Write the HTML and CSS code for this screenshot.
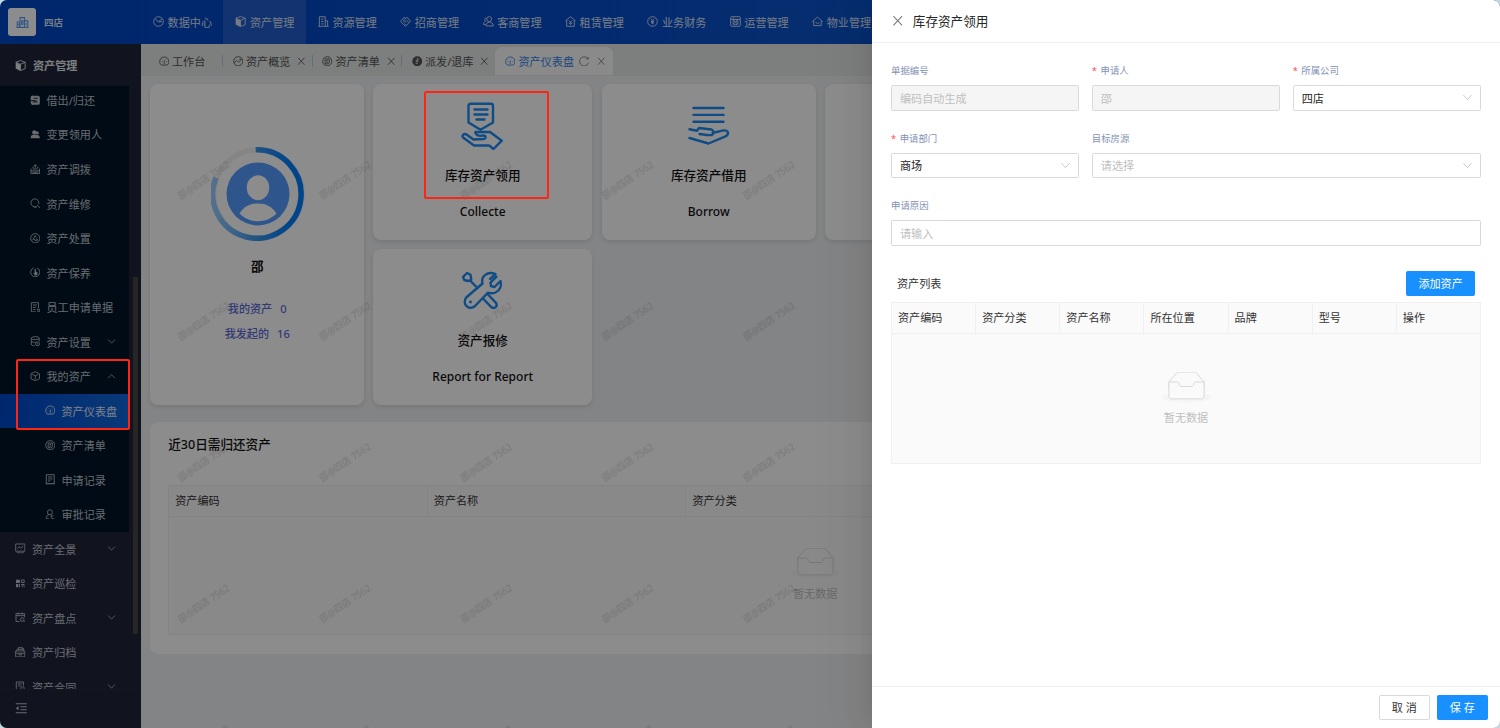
FILE: index.html
```html
<!DOCTYPE html>
<html lang="zh-CN">
<head>
    <meta charset="UTF-8">
    <meta name="viewport" content="width=device-width, initial-scale=1.0">
    <title>资产仪表盘</title>
    <link rel="stylesheet" href="styles.css">
</head>
<body>
    <!-- Icon sprite -->
    <svg class="sprite" xmlns="http://www.w3.org/2000/svg">
        <symbol id="i-city" viewBox="0 0 16 16"><path d="M1.5 14V7.5h3V14M5 14V2h5.500v12M10.500 14V6h4v8M.5 14h15M7 5v6M8.700 5v6M12.500 8.500v3M3 9.500v2"/></symbol>
        <symbol id="i-pie" viewBox="0 0 16 16"><circle cx="8" cy="8" r="7"/><path d="M3 4l5 4.500L13 4M8 8.500l5-.5"/></symbol>
        <symbol id="i-cube-solid" viewBox="0 0 16 16"><path class="fill" d="M1 3.500l6.700 3V16L1 12.500z"/><path d="M1.200 3.300L8 .8l6.800 2.500L8 6.200zM14.800 3.300v9.200L8 15.400V6.200"/></symbol>
        <symbol id="i-building" viewBox="0 0 16 16"><path d="M2 15V1h8.500v14M10.500 7H14v8M.5 15h15M4.500 4.500H8M4.500 8H8M4.500 11.500H8"/></symbol>
        <symbol id="i-shake" viewBox="0 0 16 16"><path d="M8 15L.8 8l5-6L8 3.500 10.500 2l4.700 5.500zM8 3.500L5 7.500l2.500 1.500L10 6.500l3 3M7 11l2 2"/></symbol>
        <symbol id="i-users" viewBox="0 0 16 16"><circle cx="9" cy="4.500" r="3.500"/><path d="M4.500 14.500c0-4 2-5.500 4.500-5.500s6 1 6 5.500zM4.500 2.500C2 3 2 6.500 4 7.500 2 8.500.8 10 .8 12.500H4"/></symbol>
        <symbol id="i-house" viewBox="0 0 16 16"><path d="M.8 7L8 1l7.200 6M2.500 6v9h11V6M5.500 6.500L8 9l2.500-2.500M8 9v4M5.500 10.500h5"/></symbol>
        <symbol id="i-yen" viewBox="0 0 16 16"><circle cx="8" cy="8" r="7"/><path d="M5.500 4L8 7.300 10.500 4M8 7.300V12M5.800 8h4.400M5.800 10h4.400"/></symbol>
        <symbol id="i-oper" viewBox="0 0 16 16"><rect x="1" y="1" width="14" height="14" rx="1.500"/><path d="M1 5h14M4 5.500l8 7M12 5.500l-8 7M4 3h2"/><circle cx="8" cy="9" r="3.800"/></symbol>
        <symbol id="i-home" viewBox="0 0 16 16"><path d="M.8 8L8 1.500 15.200 8H13.500v6h-11V8zM5.500 9c.8 2.500 4.200 2.500 5 0"/></symbol>
        <symbol id="i-gauge" viewBox="0 0 16 16"><path d="M3.500 13.800a7 7 0 1 1 9 0zM8 12V7M4 8.500h1M11 8.500h1M5.500 5l.6.600M10.500 5l-.6.600"/></symbol>
        <symbol id="i-trend" viewBox="0 0 16 16"><circle cx="8" cy="8" r="7"/><path d="M2 10l4-3 2.500 2.500L13 5M9.500 5H13"/></symbol>
        <symbol id="i-list" viewBox="0 0 16 16"><circle cx="8" cy="8" r="7"/><path d="M4.800 4.500h6.400v5.500L9.500 12H4.800zM6.500 7h3M6.500 9.500h3"/></symbol>
        <symbol id="i-send" viewBox="0 0 16 16"><circle class="fill" cx="8" cy="8" r="7.500"/><path class="cut" d="M9 3.500v5.500H6zM5.500 11.500h3"/></symbol>
        <symbol id="i-reload" viewBox="0 0 16 16"><path d="M14.500 10.500A7 7 0 1 1 13.500 4M14 1.500V4.500H11"/></symbol>
        <symbol id="i-close" viewBox="0 0 16 16"><path d="M2 1.500l12 13M14 1.500l-12 13"/></symbol>
        <symbol id="i-lend" viewBox="0 0 16 16"><path class="fill" d="M5 1h7a3 3 0 0 1 3 3v8a3 3 0 0 1-3 3H5a3 3 0 0 1-3.500-3H1V4.500A3.500 3.500 0 0 1 5 1z"/><path class="cut" d="M5.500 5H12M0 8.500h8.500l2.500 2H4"/></symbol>
        <symbol id="i-people" viewBox="0 0 16 16"><circle class="fill" cx="6.500" cy="5" r="3.200"/><circle class="fill" cx="11" cy="6" r="2.500"/><path class="fill" d="M1 14c0-4 2-5.500 5.500-5.500 1.500 0 2 .5 4 .5 3 0 4.500 1.500 4.500 5z"/></symbol>
        <symbol id="i-transfer" viewBox="0 0 16 16"><path d="M1.500 7v7.500h13V7M1 10.500h14M4 7.500h8M8 6V1M5.500 3.500L8 1l2.500 2.500M3.500 5h2M11 5h2M4 12.600h8"/></symbol>
        <symbol id="i-search" viewBox="0 0 16 16"><path d="M9.500 13A6 6 0 1 1 13.200 9M10.500 10.500l4.500 4.500M6 14h4"/></symbol>
        <symbol id="i-dispose" viewBox="0 0 16 16"><circle cx="8" cy="8" r="7"/><path d="M4 11l4-7 1.500 2.500M5.500 8.500L9 12M7 11h4.500L10 8"/></symbol>
        <symbol id="i-care" viewBox="0 0 16 16"><path d="M5.500 1.500a7 7 0 1 0 5 0"/><path class="fill" d="M7 3h2v4l2.500 1.500c.5 2-.5 4-1.500 4.500H7.500L5 9l2 .5z"/></symbol>
        <symbol id="i-doc" viewBox="0 0 16 16"><path d="M9 15H2V1h11v8M4.500 4.500h6M4.500 8h5M4.500 11.500H8M11 11h4v4h-2.500z"/></symbol>
        <symbol id="i-db" viewBox="0 0 16 16"><ellipse cx="8" cy="3.300" rx="6" ry="2.300"/><path d="M2 3.300V13c0 1 2 2 5 2M14 3.300V8M2 8c1 1.500 5 2 7 1.500"/><circle cx="11.500" cy="12" r="3"/><path d="M11.500 11v2"/></symbol>
        <symbol id="i-cube" viewBox="0 0 16 16"><path d="M8 1l6.500 3.200v7.600L8 15l-6.500-3.200V4.200zM3.500 5.200L8 7.500l4.500-2.300M8 7.500V13"/></symbol>
        <symbol id="i-record" viewBox="0 0 16 16"><path d="M2 1h12v14H2zM4.500 4.500h7M4.500 7.500h7M4.500 10.500h4M1 15h14"/></symbol>
        <symbol id="i-stamp" viewBox="0 0 16 16"><circle cx="7.500" cy="5" r="3.800"/><path d="M6 8.500c-3 1-4 3-4 6.500h4M9 9c1 .5 1 2 0 3l2 3h3.500M10 11l3-1"/></symbol>
        <symbol id="i-chart" viewBox="0 0 16 16"><path d="M1 1.500h14v11H1zM3.500 8.500l3-3L9 8l3.500-3.500M2.500 15h11"/></symbol>
        <symbol id="i-qr" viewBox="0 0 16 16"><path class="fill" d="M1.500 2.500h6v5h-6zM1.500 9h3v5h-3zM9.500 9h5v2h-5zM5.500 9h2v5h-2z"/><path d="M10 3h4v4h-4zM10 12.500h1.500v1.500M14 12v2"/></symbol>
        <symbol id="i-check" viewBox="0 0 16 16"><path d="M7 14.500H1.500v-12h13V8M1.500 5.500h13M5 .8v3M11 .8v3"/><circle cx="11" cy="11.500" r="2.800"/><path d="M13 13.500l2 1.500"/></symbol>
        <symbol id="i-archive" viewBox="0 0 16 16"><path d="M1 6h14v9H1zM3 6V3.500h10V6M5 3.500V1h6v2.500M1 9.500h14M6 9.500V12h4V9.500M11 1l3 2.500"/></symbol>
        <symbol id="i-contract" viewBox="0 0 16 16"><path d="M8 14.500H2v-13h11V7M4.500 4.500h6M4.500 7.500h4"/><circle cx="11.500" cy="11" r="2.500"/><path d="M10 15l1.500-1.500L13 15"/></symbol>
        <symbol id="i-down" viewBox="0 0 16 16"><path d="M2 4.500l6 6.500 6-6.500"/></symbol>
        <symbol id="i-up" viewBox="0 0 16 16"><path d="M2 11l6-6.500L14 11"/></symbol>
        <symbol id="i-fold" viewBox="0 0 16 16"><path d="M1 2.200h14M7 6.100h8M7 9.900h8M1 13.800h14"/><path class="fill" d="M4.500 5v6L1 8z"/></symbol>
        <symbol id="i-empty" viewBox="0 0 64 41">
            <ellipse class="empty-shadow" cx="32" cy="33" rx="32" ry="7"/>
            <path class="empty-line" d="M55 12.760L44.854 1.258C44.367.474 43.656 0 42.907 0H21.093c-.749 0-1.460.474-1.947 1.257L9 12.761V22h46v-9.240z"/>
            <path class="empty-line empty-box" d="M41.613 15.931c0-1.605.994-2.930 2.227-2.931H55v18.137C55 33.260 53.680 35 52.050 35h-40.100C10.320 35 9 33.259 9 31.137V13h11.160c1.233 0 2.227 1.323 2.227 2.928v.022c0 1.605 1.005 2.901 2.237 2.901h14.752c1.232 0 2.237-1.308 2.237-2.913v-.007z"/>
        </symbol>
    </svg>

    <div class="app">
        <header class="topbar">
            <div class="brand">
                <span class="logo"><svg class="icon"><use href="#i-city"/></svg></span>
                <span class="brand-name">四店</span>
            </div>
            <nav class="nav">
                <a class="nav-item"><svg class="icon"><use href="#i-pie"/></svg>数据中心</a>
                <a class="nav-item active"><svg class="icon"><use href="#i-cube-solid"/></svg>资产管理</a>
                <a class="nav-item"><svg class="icon"><use href="#i-building"/></svg>资源管理</a>
                <a class="nav-item"><svg class="icon"><use href="#i-shake"/></svg>招商管理</a>
                <a class="nav-item"><svg class="icon"><use href="#i-users"/></svg>客商管理</a>
                <a class="nav-item"><svg class="icon"><use href="#i-house"/></svg>租赁管理</a>
                <a class="nav-item"><svg class="icon"><use href="#i-yen"/></svg>业务财务</a>
                <a class="nav-item"><svg class="icon"><use href="#i-oper"/></svg>运营管理</a>
                <a class="nav-item"><svg class="icon"><use href="#i-home"/></svg>物业管理</a>
            </nav>
        </header>

        <div class="main">
            <aside class="sidebar">
                <div class="side-title"><svg class="icon"><use href="#i-cube-solid"/></svg>资产管理</div>
                <div class="side-scroll">
                    <div class="menu">
                        <div class="submenu">
                            <div class="item lv2"><svg class="icon"><use href="#i-lend"/></svg>借出/归还</div>
                            <div class="item lv2"><svg class="icon"><use href="#i-people"/></svg>变更领用人</div>
                            <div class="item lv2"><svg class="icon"><use href="#i-transfer"/></svg>资产调拨</div>
                            <div class="item lv2"><svg class="icon"><use href="#i-search"/></svg>资产维修</div>
                            <div class="item lv2"><svg class="icon"><use href="#i-dispose"/></svg>资产处置</div>
                            <div class="item lv2"><svg class="icon"><use href="#i-care"/></svg>资产保养</div>
                            <div class="item lv2"><svg class="icon"><use href="#i-doc"/></svg>员工申请单据</div>
                            <div class="item lv2"><svg class="icon"><use href="#i-db"/></svg>资产设置<svg class="icon arrow"><use href="#i-down"/></svg></div>
                            <div class="item lv2"><svg class="icon"><use href="#i-cube"/></svg>我的资产<svg class="icon arrow"><use href="#i-up"/></svg></div>
                            <div class="item lv3 selected"><svg class="icon"><use href="#i-gauge"/></svg>资产仪表盘</div>
                            <div class="item lv3"><svg class="icon"><use href="#i-list"/></svg>资产清单</div>
                            <div class="item lv3"><svg class="icon"><use href="#i-record"/></svg>申请记录</div>
                            <div class="item lv3"><svg class="icon"><use href="#i-stamp"/></svg>审批记录</div>
                        </div>
                        <div class="item"><svg class="icon"><use href="#i-chart"/></svg>资产全景<svg class="icon arrow"><use href="#i-down"/></svg></div>
                        <div class="item"><svg class="icon"><use href="#i-qr"/></svg>资产巡检</div>
                        <div class="item"><svg class="icon"><use href="#i-check"/></svg>资产盘点<svg class="icon arrow"><use href="#i-down"/></svg></div>
                        <div class="item"><svg class="icon"><use href="#i-archive"/></svg>资产归档</div>
                        <div class="item"><svg class="icon"><use href="#i-contract"/></svg>资产合同<svg class="icon arrow"><use href="#i-down"/></svg></div>
                    </div>
                    <div class="scrollbar"></div>
                </div>
                <div class="side-foot"><svg class="icon"><use href="#i-fold"/></svg></div>
            </aside>

            <main class="page">
                <div class="tabs">
                    <div class="tab first"><svg class="icon"><use href="#i-gauge"/></svg>工作台</div>
                    <div class="tab"><svg class="icon"><use href="#i-trend"/></svg>资产概览<svg class="icon x"><use href="#i-close"/></svg></div>
                    <div class="tab"><svg class="icon"><use href="#i-list"/></svg>资产清单<svg class="icon x"><use href="#i-close"/></svg></div>
                    <div class="tab last"><svg class="icon"><use href="#i-send"/></svg>派发/退库<svg class="icon x"><use href="#i-close"/></svg></div>
                    <div class="tab active"><svg class="icon"><use href="#i-gauge"/></svg>资产仪表盘<svg class="icon reload"><use href="#i-reload"/></svg><svg class="icon x"><use href="#i-close"/></svg></div>
                </div>

                <div class="content">
                    <div class="cards">
                        <section class="card profile">
                            <svg class="avatar" viewBox="0 0 94 94">
                                <defs>
                                    <linearGradient id="ring" x1="0" y1="0" x2="1" y2="0">
                                        <stop offset="0" stop-color="#98cdff"/>
                                        <stop offset=".5" stop-color="#3898ee"/>
                                        <stop offset=".85" stop-color="#007ffb"/>
                                    </linearGradient>
                                </defs>
                                <circle class="ring-bg" cx="47" cy="47" r="44.200"/>
                                <path class="ring" d="M44.700 2.860A44.200 44.200 0 1 1 4.800 30.800"/>
                                <circle class="face-bg" cx="47" cy="47" r="31.500"/>
                                <ellipse class="face" cx="47" cy="40.700" rx="11.200" ry="12.500"/>
                                <path class="face" d="M28.500 66.500C33 59.500 39 56.500 47 56.500s14 3 18.500 10C60 72 54 74.200 47 74.200s-13-2.200-18.500-7.700z"/>
                            </svg>
                            <div class="user">邵</div>
                            <div class="stat">我的资产<b>0</b></div>
                            <div class="stat">我发起的<b>16</b></div>
                        </section>
                        <section class="card action">
                            <svg class="pic" viewBox="0 0 48 48">
                                <path d="M13 1.700h20a2 2 0 0 1 2 2v16.800L22.500 27.700 10.500 20.500V3.700a2 2 0 0 1 2-2zM16.500 7.500h13M16.500 12.500h13M18.500 17.500h8"/>
                                <path d="M17.500 30h14.500l11.800 8.700-8.300 8.300-4.300-3.500H16L5 35.500c-1.500-2.500 1.500-4.500 3.500-3l7 5 10-.5c3-.5 2.500-4-.5-3.500-3 .8-6-.3-7-1.500-.8-1-.7-2-.5-2z"/>
                            </svg>
                            <h3>库存资产领用</h3>
                            <p>Collecte</p>
                        </section>
                        <section class="card action">
                            <svg class="pic" viewBox="0 0 48 48">
                                <path d="M9.500 6h30M9.500 12.900h30M9.500 19.800h30"/>
                                <path d="M5.500 27.200l7.500 1.500 2-2.700 12.500 1.500c2.500 1 3 4 .5 5.500-4 .5-8-.5-12.500-1M28.500 31l11-2.600c4.500-.5 6.500 3.500 2 6L24.500 41.500 5.500 36"/>
                            </svg>
                            <h3>库存资产借用</h3>
                            <p>Borrow</p>
                        </section>
                        <section class="card"></section>
                        <section class="card action">
                            <svg class="pic" viewBox="0 -1.500 48 48">
                                <path d="M19.500 19.500L12 12M5 8.500l4-4 3.500 1.800.8 5-3.300 1.200L6.300 11.500z"/>
                                <path d="M38.500 8.200l-6 6 .5 3.500 3.500.8 6-6c1.300 5-.5 9.500-5 11.500-2.500 1-5.500.8-7.500.2L17 37.500c-6 5-13.500-2-8.800-8.500L24.500 15c-2-7 5-13 13-9.300L32 10.500"/>
                                <path d="M25.500 30.500l8 8.300c3.500 2 6.500-1.300 4.500-4.500L30 26"/>
                                <circle class="fill" cx="12.500" cy="33.500" r="1.400"/>
                            </svg>
                            <h3>资产报修</h3>
                            <p>Report for Report</p>
                        </section>
                    </div>

                    <section class="card panel">
                        <h3>近30日需归还资产</h3>
                        <div class="table">
                            <div class="thead">
                                <div>资产编码</div><div>资产名称</div><div>资产分类</div><div></div><div></div>
                            </div>
                            <div class="empty">
                                <svg class="empty-icon"><use href="#i-empty"/></svg>
                                暂无数据
                            </div>
                        </div>
                    </section>

                    <!-- Watermark tiled over the page -->
                    <svg class="watermark">
                        <defs>
                            <pattern id="wm" width="141.300" height="141.100" patternUnits="userSpaceOnUse">
                                <text class="wm-text" transform="translate(39.700 124) rotate(-34)" textLength="60" lengthAdjust="spacingAndGlyphs">邵@四店 7562</text>
                            </pattern>
                        </defs>
                        <rect width="100%" height="100%" fill="url(#wm)"/>
                    </svg>
                </div>
            </main>
        </div>

        <div class="mask"></div>

        <aside class="drawer">
            <div class="drawer-head"><svg class="icon"><use href="#i-close"/></svg>库存资产领用</div>
            <div class="drawer-body">
                <div class="form">
                    <div class="form-item">
                        <label>单据编号</label>
                        <div class="field disabled">编码自动生成</div>
                    </div>
                    <div class="form-item">
                        <label class="required">申请人</label>
                        <div class="field disabled">邵</div>
                    </div>
                    <div class="form-item">
                        <label class="required">所属公司</label>
                        <div class="field">四店<svg class="icon"><use href="#i-down"/></svg></div>
                    </div>
                    <div class="form-item">
                        <label class="required">申请部门</label>
                        <div class="field">商场<svg class="icon"><use href="#i-down"/></svg></div>
                    </div>
                    <div class="form-item span2">
                        <label>目标房源</label>
                        <div class="field placeholder">请选择<svg class="icon"><use href="#i-down"/></svg></div>
                    </div>
                    <div class="form-item span3">
                        <label>申请原因</label>
                        <div class="field placeholder">请输入</div>
                    </div>
                </div>
                <div class="list-head">
                    <span>资产列表</span>
                    <button class="btn primary add">添加资产</button>
                </div>
                <div class="table">
                    <div class="thead">
                        <div>资产编码</div><div>资产分类</div><div>资产名称</div><div>所在位置</div><div>品牌</div><div>型号</div><div>操作</div>
                    </div>
                    <div class="empty">
                        <svg class="empty-icon"><use href="#i-empty"/></svg>
                        暂无数据
                    </div>
                </div>
            </div>
            <div class="drawer-foot">
                <button class="btn">取 消</button>
                <button class="btn primary">保 存</button>
            </div>
        </aside>

        <!-- Guide frames -->
        <div class="frame frame-menu"></div>
        <div class="frame frame-card"></div>
    </div>
</body>
</html>
```

FILE: styles.css
```css
* {
    box-sizing: border-box;
}

body {
    margin: 0;
    background: #c3dadf;
    font-family: "Noto Sans", "Noto Sans CJK SC", sans-serif;
    font-size: 11.1px;
    color: #333;
}

h3,
p {
    margin: 0;
}

.sprite {
    display: none;
}

.icon {
    width: 11px;
    height: 11px;
    flex: none;
    fill: none;
    stroke: currentColor;
    stroke-width: 1.3;
}

.fill {
    fill: currentColor;
    stroke: none;
}

.cut {
    fill: none;
    stroke: var(--cut);
}

.app {
    position: relative;
    display: flex;
    flex-direction: column;
    height: 728px;
    overflow: hidden;
    border-radius: 7px;
    background: #eef0f3;
}

/* Top bar */
.topbar {
    display: flex;
    height: 44px;
    flex: none;
    background: linear-gradient(90deg, #0046c4 0, #0449c6 400px, #0d55ce 900px, #1160d5 100%);
    color: #d8e2f5;
}

.brand {
    display: flex;
    align-items: center;
    width: 141px;
    padding-left: 8px;
    gap: 8px;
}

.logo {
    display: flex;
    align-items: center;
    justify-content: center;
    width: 28px;
    height: 28px;
    border-radius: 3px;
    background: #fff;
    color: #5b9cf0;
}

.logo .icon {
    width: 13px;
    height: 13px;
}

.brand-name {
    padding-bottom: 1px;
    font-size: 9.5px;
    font-weight: 700;
}

.nav {
    display: flex;
}

.nav-item {
    display: flex;
    align-items: center;
    gap: 3.6px;
    width: 82.4px;
    padding: 0 0 1px 12px;
    white-space: nowrap;
}

.nav-item.active {
    background: rgba(255, 255, 255, .12);
}

.main {
    display: flex;
    flex: 1;
    min-height: 0;
}

/* Sidebar */
.sidebar {
    --cut: #001529;
    display: flex;
    flex-direction: column;
    width: 141px;
    flex: none;
    background: #202539;
    color: #bfc3c9;
}

.side-title {
    display: flex;
    align-items: center;
    gap: 7px;
    height: 42px;
    flex: none;
    padding-left: 15px;
    font-weight: 700;
    color: #e3e5ea;
}

.side-scroll {
    display: flex;
    flex: 1;
    min-height: 0;
    overflow: hidden;
}

.menu {
    width: 129px;
    margin-top: -2.8px;
}

.submenu {
    background: #001529;
}

.item {
    display: flex;
    align-items: center;
    gap: 6.5px;
    height: 34.53px;
    padding: 0 13px 1px 15px;
    white-space: nowrap;
}

.item.lv2 {
    padding-left: 29.5px;
}

.item.lv3 {
    padding-left: 44.5px;
    padding-right: 0;
}

.item .icon {
    width: 10.5px;
    height: 10.5px;
}

.item .arrow {
    width: 9px;
    height: 9px;
    margin-left: auto;
}

.item.selected {
    background: linear-gradient(90deg, #0047c9, #1169dd);
    color: #e6ecf7;
}

.scrollbar {
    width: 5.5px;
    height: 357px;
    margin: 191px 0 0 3.5px;
    background: #484645;
}

.side-foot {
    display: flex;
    align-items: center;
    height: 39.5px;
    flex: none;
    padding: 0 0 1px 15px;
    border-top: 1px solid #262b3d;
}

.side-foot .icon {
    width: 12.5px;
    height: 12.5px;
}

/* Tabs */
.page {
    display: flex;
    flex-direction: column;
    flex: 1;
    min-width: 0;
}

.tabs {
    --cut: #e3e6e5;
    display: flex;
    align-items: flex-end;
    height: 32px;
    flex: none;
    padding: 0 0 1px 8px;
    background: #e3e6e5;
    color: #505356;
}

.tab {
    display: flex;
    align-items: center;
    gap: 3px;
    position: relative;
    width: 89.5px;
    height: 28px;
    padding-left: 9.5px;
    white-space: nowrap;
}

.tab .icon {
    width: 10.5px;
    height: 10.5px;
}

.tab .x {
    width: 8.5px;
    height: 8.5px;
    margin-left: 4px;
    stroke-width: 1.6;
}

.tab::after {
    content: "";
    position: absolute;
    right: 0;
    top: 8px;
    width: 1px;
    height: 12px;
    background: #b4c9e6;
}

.tab.first {
    width: 74px;
}

.tab.last {
    width: 93px;
}

.tab.last .x {
    margin-left: 3px;
}

.tab.last::after,
.tab.active::after {
    display: none;
}

.tab.active {
    width: 118px;
    gap: 3.5px;
    border-radius: 7px 7px 0 0;
    background: #fbfcfc;
    color: #2f83ea;
}

.tab.active .reload,
.tab.active .x {
    color: #77797c;
}

.tab.active .reload {
    margin-left: 1.5px;
}

/* Content */
.content {
    position: relative;
    flex: 1;
    padding: 8px 8.7px;
    overflow: hidden;
}

.cards {
    display: grid;
    grid-template-columns: 214px 219px 214px 214.5px;
    grid-template-rows: 155.5px 155.5px;
    gap: 9.5px;
    height: 321px;
}

.card {
    border-radius: 8px;
    background: #fff;
    box-shadow: 0 2px 4px rgba(0, 0, 0, .1);
}

.profile {
    display: flex;
    flex-direction: column;
    align-items: center;
    grid-row: span 2;
    padding: 63px 0 0 1px;
}

.avatar {
    width: 94px;
    height: 94px;
    margin-left: 1px;
}

.ring-bg,
.ring {
    fill: none;
    stroke: #f3f3f3;
    stroke-width: 5.5;
}

.ring {
    stroke: url(#ring);
}

.face-bg {
    fill: #559bff;
}

.face {
    fill: #fff;
}

.user {
    margin: 16px 0 18.5px;
    font-size: 12.6px;
    font-weight: 700;
    line-height: 20px;
    color: #111;
}

.stat {
    height: 25.3px;
    line-height: 25.3px;
    font-weight: 500;
    color: #5b6bd6;
}

.stat b {
    margin-left: 8px;
    font-weight: 500;
}

.action {
    display: flex;
    flex-direction: column;
    align-items: center;
    padding-top: 18px;
    color: #111;
}

.pic {
    width: 48px;
    height: 48px;
    margin-right: 1px;
    fill: none;
    stroke: #1c8bf4;
    stroke-width: 2.4;
    stroke-linecap: round;
    stroke-linejoin: round;
}

.pic .fill {
    fill: #1c8bf4;
}

.action h3,
.panel h3 {
    font-size: 12.6px;
    font-weight: 500;
    line-height: 20px;
    color: #111;
}

.action h3 {
    margin-top: 16px;
}

.action p {
    margin-top: 15.5px;
    font-size: 12px;
    font-weight: 500;
    line-height: 20px;
}

.panel {
    width: 1331px;
    height: 231.5px;
    margin-top: 17px;
    padding: 13px 18.5px;
    box-shadow: none;
}

.panel .table {
    width: 1294px;
    margin-top: 29.5px;
}

/* Tables */
.table {
    border: 1px solid #f0f0f0;
    background: #fafafa;
}

.thead {
    display: flex;
    height: 31px;
    border-bottom: 1px solid #f0f0f0;
}

.thead div {
    flex: 1;
    padding-left: 6px;
    line-height: 29px;
    border-right: 1px solid #f0f0f0;
}

.thead div:last-child {
    border-right: none;
}

.empty {
    display: flex;
    flex-direction: column;
    align-items: center;
    gap: 4.5px;
    height: 117.5px;
    padding-top: 31px;
    line-height: 20px;
    color: #bfbfbf;
}

.empty-icon {
    width: 49px;
    height: 31.5px;
    overflow: visible;
}

.empty-shadow {
    fill: #f5f5f5;
}

.empty-line {
    fill: none;
    stroke: #d9d9d9;
    stroke-width: 1.3;
}

.empty-box {
    fill: #fafafa;
}

.watermark {
    position: absolute;
    inset: 0;
    width: 100%;
    height: 100%;
    pointer-events: none;
}

.wm-text {
    font-size: 10px;
    fill: rgba(0, 0, 0, .16);
}

/* Overlay and drawer */
.mask {
    position: absolute;
    inset: 0;
    background: rgba(0, 0, 0, .45);
}

.drawer {
    position: absolute;
    top: 0;
    right: 0;
    bottom: 0;
    display: flex;
    flex-direction: column;
    width: 627.7px;
    background: #fff;
    box-shadow: -6px 0 16px -8px rgba(0, 0, 0, .08), -9px 0 28px 0 rgba(0, 0, 0, .05), -12px 0 48px 16px rgba(0, 0, 0, .03);
}

.drawer-head {
    display: flex;
    align-items: center;
    gap: 9.5px;
    height: 43px;
    flex: none;
    padding: 0 0 1px 19.5px;
    border-bottom: 1px solid #f0f0f0;
    font-size: 12.6px;
    color: #262626;
}

.drawer-head .icon {
    width: 11.5px;
    height: 11.5px;
    stroke-width: 1.4;
    color: #777;
}

.drawer-body {
    flex: 1;
    padding: 18px 19px 0 18.7px;
}

.form {
    display: grid;
    grid-template-columns: repeat(3, 1fr);
    column-gap: 12.5px;
}

.form-item {
    height: 67.5px;
}

.form-item.span2 {
    grid-column: span 2;
}

.form-item.span3 {
    grid-column: span 3;
}

.form-item label {
    display: block;
    height: 24.4px;
    line-height: 20px;
    font-size: 9.4px;
    color: #8291b5;
}

.required::before {
    content: "*";
    margin-right: 3.5px;
    color: #ff4d4f;
}

.field {
    display: flex;
    align-items: center;
    justify-content: space-between;
    height: 25.5px;
    padding: 0 7px 1px 8px;
    border: 1px solid #d9d9d9;
    border-radius: 1.5px;
    color: #262626;
}

.field.disabled {
    background: #f5f5f5;
    color: #bfbfbf;
}

.field.placeholder {
    color: #bfbfbf;
}

.field .icon {
    color: #bfbfbf;
    stroke-width: 1.2;
}

.list-head {
    display: flex;
    align-items: center;
    justify-content: space-between;
    height: 38.5px;
    padding: 0 6px;
}

.btn {
    height: 25.5px;
    padding: 0 11.2px;
    border: 1px solid #d9d9d9;
    border-radius: 1.5px;
    background: #fff;
    font: inherit;
    line-height: 1;
    color: #333;
    white-space: nowrap;
}

.btn.primary {
    border-color: #1890ff;
    background: #1890ff;
    color: #fff;
}

.btn.add {
    margin-top: 1px;
}

.drawer-body .table .empty {
    height: 129px;
    padding-top: 37.5px;
}

.drawer-foot {
    display: flex;
    align-items: center;
    justify-content: flex-end;
    gap: 7.5px;
    height: 42px;
    flex: none;
    padding-right: 12.5px;
    border-top: 1px solid #f0f0f0;
}

.drawer-foot .btn {
    width: 50.5px;
    padding: 0;
}

.frame {
    position: absolute;
    border: 2px solid #ff2414;
    border-radius: 2px;
}

.frame-menu {
    left: 15.5px;
    top: 359px;
    width: 114px;
    height: 70.5px;
}

.frame-card {
    left: 423.5px;
    top: 91px;
    width: 125.5px;
    height: 107.5px;
}
```
